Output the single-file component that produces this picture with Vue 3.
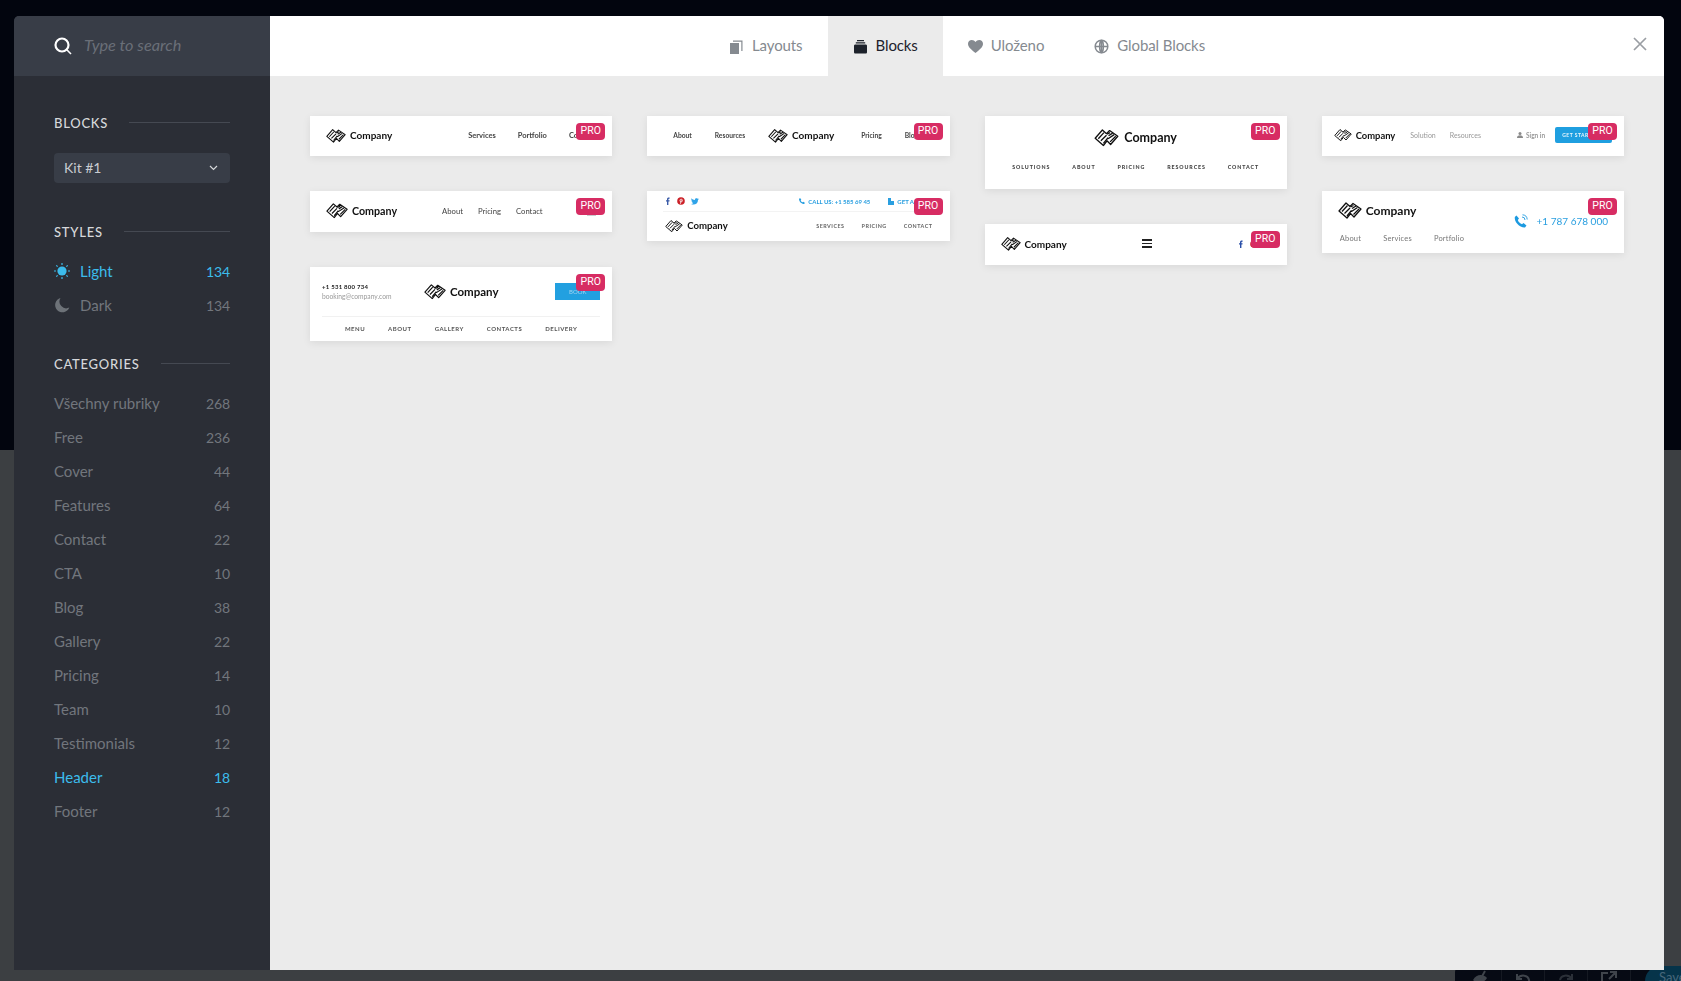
<template>
  <div class="page">
    <div class="page-top"></div>
    <div class="page-mid"></div>
    <div class="page-bottom">
      <div class="toolbar">
        <span class="tool"><svg width="20" height="20" viewBox="0 0 20 20"><path d="M3 11c3-5 9-7 14-2-3 5-9 7-14 2z" fill="#3f444b" /><path d="M15 2 6 18" stroke="#3f444b" stroke-width="2" /></svg></span>
        <span class="tool"><svg width="20" height="20" viewBox="0 0 20 20"><path d="M4 5v5h5M4.500 9.500C8 5 15 6 16 11s-2 8-6 8" fill="none" stroke="#3f444b" stroke-width="2" /></svg></span>
        <span class="tool"><svg width="20" height="20" viewBox="0 0 20 20"><path d="M16 5v5h-5M15.500 9.500C12 5 5 6 4 11" fill="none" stroke="#2b3038" stroke-width="2" /></svg></span>
        <span class="tool"><svg width="20" height="20" viewBox="0 0 20 20"><path d="M9 4H3v14h14v-6M11 3h6v6M17 3l-7 7" fill="none" stroke="#3f444b" stroke-width="2" /></svg></span>
        <span class="save">Save</span>
      </div>
    </div>

    <svg class="defs" width="0" height="0">
      <symbol id="logo" viewBox="0 0 24 18">
        <path d="M1 10 8 2 12 5.500 15 2.500 23 8 16 16 12.500 12.500 9 17Z" fill="none" stroke="#111" stroke-width="1.300" stroke-linejoin="round" />
        <path d="M4 10.500 9.500 4.500M6.500 12.500 12 7M9 15 13.500 9.500M12.500 6 15.500 4.500M14 7.500 18 5M13.500 10.500 19.500 6.500M15.500 13.500 21 8" stroke="#111" stroke-width="1.300" fill="none" />
      </symbol>
    </svg>

    <div class="modal">
      <aside class="sidebar">
        <div class="search">
          <svg class="search-icon" width="18" height="18" viewBox="0 0 18 18">
            <circle cx="8" cy="8" r="6.500" fill="none" stroke="#fff" stroke-width="2.200" />
            <path d="M12.800 12.800l4.200 4.200" stroke="#fff" stroke-width="1.600" />
          </svg>
          <span class="placeholder">Type to search</span>
        </div>
        <div class="side-body">
          <div class="side-title"><span>BLOCKS</span><i></i></div>
          <div class="select">
            <span class="select-text">Kit #1</span>
            <svg width="9" height="6" viewBox="0 0 9 6"><path d="M1 1l3.500 3.500L8 1" fill="none" stroke="#d5d7da" stroke-width="1.200" /></svg>
          </div>
          <div class="side-title styles"><span>STYLES</span><i></i></div>
          <div class="list">
            <div class="row active">
              <svg class="row-icon" width="16" height="16" viewBox="0 0 16 16">
                <circle cx="8" cy="8" r="4.600" fill="#3cbcec" />
                <path d="M8 0v2M8 14v2M0 8h2M14 8h2M2.300 2.300l1.300 1.300M12.400 12.400l1.300 1.300M2.300 13.700l1.300-1.300M12.400 3.600l1.300-1.300" stroke="#3cbcec" stroke-width="1.200" />
              </svg>
              <span class="row-name">Light</span><span class="count">134</span>
            </div>
            <div class="row">
              <svg class="row-icon" width="16" height="16" viewBox="0 0 16 16">
                <path d="M6.500 1a7.300 7.300 0 1 0 8.800 9.600A6.800 6.800 0 0 1 6.500 1z" fill="#6d7278" />
              </svg>
              <span class="row-name">Dark</span><span class="count">134</span>
            </div>
          </div>
          <div class="side-title cats"><span>CATEGORIES</span><i></i></div>
          <div class="list">
            <div v-for="c in categories" :key="c.name" class="row" :class="{ active: c.name === 'Header' }">
              <span class="row-name">{{ c.name }}</span><span class="count">{{ c.count }}</span>
            </div>
          </div>
        </div>
      </aside>

      <main class="main">
        <header class="topbar">
          <nav class="tabs">
            <div v-for="tab in tabs" :key="tab.label" class="tab" :class="{ current: tab.label === 'Blocks' }">
              <svg width="15" height="15" viewBox="0 0 15 15" class="tab-icon">
                <path v-if="tab.fill" :d="tab.d" fill="currentColor" fill-rule="evenodd" />
                <g v-else fill="none" stroke="currentColor" stroke-width="1.500">
                  <circle cx="7.500" cy="7.500" r="6.300" />
                  <path :d="tab.d" />
                </g>
              </svg>
              <span class="tab-text">{{ tab.label }}</span>
            </div>
          </nav>
          <svg class="close" width="14" height="14" viewBox="0 0 14 14"><path d="M1 1l12 12M13 1 1 13" stroke="#9a9ea3" stroke-width="1.700" /></svg>
        </header>

        <section class="grid">
          <div class="col">
            <div class="card c-a">
              <div class="thumb t1">
                <span class="brand"><svg class="logo"><use href="#logo" /></svg><b>Company</b></span>
                <span class="menu"><em>Services</em><em>Portfolio</em><em>Contact</em></span>
              </div>
              <span class="pro">PRO</span>
            </div>
            <div class="card c-b">
              <div class="thumb t2">
                <span class="brand"><svg class="logo"><use href="#logo" /></svg><b>Company</b></span>
                <span class="menu"><em>About</em><em>Pricing</em><em>Contact</em></span>
                <span class="ghost"></span>
              </div>
              <span class="pro">PRO</span>
            </div>
            <div class="card c-c">
              <div class="thumb t3">
                <div class="t3-top">
                  <div class="contact-lines"><strong>+1 531 800 734</strong><small>booking@company.com</small></div>
                  <span class="brand"><svg class="logo"><use href="#logo" /></svg><b>Company</b></span>
                  <span class="book">BOOK</span>
                </div>
                <div class="caps"><em>MENU</em><em>ABOUT</em><em>GALLERY</em><em>CONTACTS</em><em>DELIVERY</em></div>
              </div>
              <span class="pro">PRO</span>
            </div>
          </div>

          <div class="col">
            <div class="card c-a">
              <div class="thumb t4">
                <span class="menu"><em>About</em><em>Resources</em></span>
                <span class="brand"><svg class="logo"><use href="#logo" /></svg><b>Company</b></span>
                <span class="menu"><em>Pricing</em><em>Blog</em></span>
              </div>
              <span class="pro">PRO</span>
            </div>
            <div class="card c-d">
              <div class="thumb t5">
                <div class="t5-top">
                  <span class="socials">
                    <svg width="6" height="8" viewBox="0 0 6 8"><path d="M2 8V4.500H1V3.200h1V2.200C2 1 2.800.4 4.600.6v1.200c-1-.1-1.200.1-1.200.6v.8h1.200l-.2 1.300h-1V8z" fill="#3a5ba8" /></svg>
                    <svg width="8" height="8" viewBox="0 0 8 8"><circle cx="4" cy="4" r="3.800" fill="#cb2027" /><path d="M3.400 6.800 4.300 2.800" stroke="#fff" stroke-width=".8" /><circle cx="4.200" cy="3.500" r="1.300" fill="none" stroke="#fff" stroke-width=".7" /></svg>
                    <svg width="8" height="7" viewBox="0 0 8 7"><path d="M0 6c3 1.500 7 .2 7-4l1-1-1 .2.600-.9-1 .4C5.500-.2 3.700.5 4 2 2.500 2 1.200 1.300.5.300.1 1.200.3 2 1 2.600L.4 2.400c0 .8.400 1.300 1.200 1.600h-.6c.2.600.7 1 1.400 1C1.800 5.700 1 6 0 6z" fill="#2fa3e8" /></svg>
                  </span>
                  <span class="t5-call">
                    <svg width="6" height="6" viewBox="0 0 6 6"><path d="M1 0 2.300 1.500 1.700 2.400C2 3.200 2.800 4 3.600 4.300L4.500 3.700 6 5 5 6C2.500 6 0 3.500 0 1z" fill="#2a9fe0" /></svg>
                    <em>CALL US: +1 585 69 45</em>
                    <svg class="t5-doc" width="6" height="7" viewBox="0 0 6 7"><path d="M0 0h3v3h3v4H0z" fill="#2a9fe0" /></svg>
                    <em>GET A QUOTE</em>
                  </span>
                </div>
                <div class="t5-bottom">
                  <span class="brand"><svg class="logo"><use href="#logo" /></svg><b>Company</b></span>
                  <span class="caps-inline"><em>SERVICES</em><em>PRICING</em><em>CONTACT</em></span>
                </div>
              </div>
              <span class="pro">PRO</span>
            </div>
          </div>

          <div class="col">
            <div class="card c-e">
              <div class="thumb t6">
                <span class="brand"><svg class="logo"><use href="#logo" /></svg><b>Company</b></span>
                <div class="caps"><em>SOLUTIONS</em><em>ABOUT</em><em>PRICING</em><em>RESOURCES</em><em>CONTACT</em></div>
              </div>
              <span class="pro">PRO</span>
            </div>
            <div class="card c-b">
              <div class="thumb t7">
                <span class="brand"><svg class="logo"><use href="#logo" /></svg><b>Company</b></span>
                <span class="burger"><i></i><i></i><i></i></span>
                <span class="t7-social">
                  <svg width="6" height="8" viewBox="0 0 6 8"><path d="M2 8V4.500H1V3.200h1V2.200C2 1 2.800.4 4.600.6v1.200c-1-.1-1.200.1-1.200.6v.8h1.200l-.2 1.300h-1V8z" fill="#2a4fa8" /></svg>
                  <svg width="8" height="8" viewBox="0 0 8 8"><circle cx="4" cy="4" r="3.800" fill="#cb2027" /></svg>
                </span>
              </div>
              <span class="pro">PRO</span>
            </div>
          </div>

          <div class="col">
            <div class="card c-a">
              <div class="thumb t8">
                <span class="brand"><svg class="logo"><use href="#logo" /></svg><b>Company</b></span>
                <span class="menu"><em>Solution</em><em>Resources</em></span>
                <span class="t8-right">
                  <svg width="6" height="6" viewBox="0 0 6 6"><circle cx="3" cy="1.500" r="1.500" fill="#8a8a8a" /><path d="M0 6c0-2 1-2.800 3-2.800S6 4 6 6z" fill="#8a8a8a" /></svg>
                  <em>Sign in</em>
                  <span class="start">GET STARTED</span>
                </span>
              </div>
              <span class="pro">PRO</span>
            </div>
            <div class="card c-f">
              <div class="thumb t9">
                <div class="t9-left">
                  <span class="brand"><svg class="logo"><use href="#logo" /></svg><b>Company</b></span>
                  <span class="menu"><em>About</em><em>Services</em><em>Portfolio</em></span>
                </div>
                <span class="phone">
                  <svg width="14" height="14" viewBox="0 0 14 14">
                    <path d="M2.500 1.500 5 4.500 3.800 6C4.500 8 6 9.500 8 10.200L9.500 9l3 2.500L11 13.500C6 14 0 8 .8 3z" fill="#1d9ae0" />
                    <path d="M8 3a3 3 0 0 1 3 3M8.500.8a5 5 0 0 1 4.700 4.700" fill="none" stroke="#1d9ae0" stroke-width=".9" />
                  </svg>
                  <span>+1 787 678 000</span>
                </span>
              </div>
              <span class="pro">PRO</span>
            </div>
          </div>
        </section>
      </main>
    </div>
  </div>
</template>

<script setup>
const categories = [
  { name: 'Všechny rubriky', count: 268 },
  { name: 'Free', count: 236 },
  { name: 'Cover', count: 44 },
  { name: 'Features', count: 64 },
  { name: 'Contact', count: 22 },
  { name: 'CTA', count: 10 },
  { name: 'Blog', count: 38 },
  { name: 'Gallery', count: 22 },
  { name: 'Pricing', count: 14 },
  { name: 'Team', count: 10 },
  { name: 'Testimonials', count: 12 },
  { name: 'Header', count: 18 },
  { name: 'Footer', count: 12 },
]

const tabs = [
  { label: 'Layouts', fill: true, d: 'M1 4h9v11H1zM4 1.500h9.500V12H12.300V2.700H4z' },
  { label: 'Blocks', fill: true, d: 'M4 1h7v1.300H4zM2.800 3.300h9.400v1.300H2.800zM2.500 5.500h10c1 0 1.500.5 1.500 1.500v6c0 1-.5 1.500-1.500 1.500h-10C1.500 14.500 1 14 1 13V7c0-1 .5-1.500 1.500-1.500z' },
  { label: 'Uloženo', fill: true, d: 'M7.500 14C3 10.500 0 8 0 4.800 0 2.500 1.700 1 3.800 1 5.300 1 6.700 1.700 7.500 3 8.300 1.700 9.700 1 11.200 1 13.300 1 15 2.500 15 4.800 15 8 12 10.500 7.500 14z' },
  { label: 'Global Blocks', fill: false, d: 'M1.200 7.500h12.600M7.500 1.200v12.600M7.500 1.200C5 3 5 12 7.500 13.800M7.500 1.200C10 3 10 12 7.500 13.800' },
]
</script>

<style>
html, body { margin: 0; background: #02050e; }
</style>

<style scoped>
.page {
  position: relative;
  height: 981px;
  display: flex;
  flex-direction: column;
  overflow: hidden;
  font-family: Lato, "Noto Sans", sans-serif;
}
.page-top { height: 450px; background: #02050e; }
.page-mid { flex: 1; background: #3c3f42; }
.page-bottom { height: 15px; background: #3c3f42; display: flex; justify-content: flex-end; }
.toolbar {
  width: 226px;
  background: #060a14;
  border-top-left-radius: 6px;
  display: flex;
  padding-top: 3px;
  padding-left: 4px;
  box-sizing: border-box;
  overflow: hidden;
}
.tool {
  width: 43px;
  height: 20px;
  flex: none;
  display: flex;
  justify-content: center;
  border-right: 1px solid #151922;
  box-sizing: border-box;
}
.save {
  margin-left: 14px;
  margin-top: -3px;
  flex: none;
  width: 60px;
  height: 30px;
  padding-left: 14px;
  padding-top: 3px;
  box-sizing: border-box;
  background: #06344a;
  border-radius: 15px 0 0 15px;
  color: #47677a;
  font-size: 13px;
}
.defs { position: absolute; }

.modal {
  position: absolute;
  left: 14px;
  top: 16px;
  width: 1650px;
  height: 954px;
  display: flex;
  border-radius: 5px 5px 0 0;
  overflow: hidden;
}

.sidebar { width: 256px; flex: none; background: #2b2e36; display: flex; flex-direction: column; }
.search {
  height: 60px;
  background: #383d47;
  display: flex;
  align-items: center;
  padding-left: 40px;
  gap: 12px;
}
.placeholder { font-style: italic; font-size: 16.300px; color: #6a6f78; padding-bottom: 3px; }
.side-body { padding: 36px 40px 0; }
.side-title {
  height: 20px;
  display: flex;
  align-items: center;
  gap: 21px;
  color: #d6d8db;
  font-size: 13px;
  letter-spacing: .75px;
  font-weight: 500;
}
.side-title span { padding-top: 1px; }
.side-title i { flex: 1; height: 1px; background: #454952; }
.styles { margin-top: 38px; }
.cats { margin-top: 31px; }
.select {
  margin-top: 21px;
  height: 30px;
  background: #383d47;
  border-radius: 4px;
  display: flex;
  align-items: center;
  justify-content: space-between;
  padding: 0 12px 0 10px;
  color: #c9ccd1;
  font-size: 14px;
}
.select-text { padding-bottom: 2px; }
.list { margin-top: 13px; }
.row {
  height: 34px;
  display: flex;
  align-items: center;
  color: #72767d;
  font-size: 15px;
}
.row.active { color: #3cbcec; }
.row-icon { margin-right: 10px; }
.row-name { flex: 1; }
.count { font-size: 14px; letter-spacing: -.1px; }

.main { flex: 1; background: #ebebeb; display: flex; flex-direction: column; min-width: 0; }
.topbar {
  position: relative;
  height: 60px;
  background: #fff;
  display: flex;
  justify-content: center;
}
.tabs { display: flex; }
.tab {
  display: flex;
  align-items: center;
  gap: 8px;
  padding: 0 25px;
  color: #858a90;
  font-size: 15px;
  letter-spacing: -.1px;
}
.tab-text { padding-bottom: 2px; }
.tab.current { background: #ebebeb; color: #1d222b; }
.tab-icon { flex: none; }
.close { position: absolute; right: 17px; top: 21px; }

.grid {
  flex: 1;
  display: grid;
  grid-template-columns: repeat(4, minmax(0, 1fr));
  gap: 35px;
  padding: 40px;
  align-items: start;
}
.col { display: flex; flex-direction: column; gap: 35px; min-width: 0; }
.card {
  position: relative;
  background: #fff;
  box-shadow: 0 2px 8px rgba(0, 0, 0, .08);
  overflow: hidden;
}
.c-a { height: 40px; }
.c-b { height: 41px; }
.c-c { height: 74px; }
.c-d { height: 50px; }
.c-e { height: 73px; }
.c-f { height: 62px; }
.pro {
  position: absolute;
  top: 7px;
  right: 7px;
  width: 29px;
  height: 17px;
  background: #d72c63;
  border-radius: 4px;
  color: #fff;
  font: 10.500px/16px Roboto, sans-serif;
  text-align: center;
}

.thumb { height: 100%; filter: blur(.25px); box-sizing: border-box; font-family: Lato, sans-serif; }
.thumb em { font-style: normal; white-space: nowrap; }
.brand { display: inline-flex; align-items: center; gap: 4px; color: #111; }
.brand b { font-weight: 700; font-size: 10px; }
.logo { width: 20px; height: 15px; flex: none; }
.menu { display: flex; color: #444; font-size: 7.500px; font-weight: 700; }

.t1 { display: flex; align-items: center; padding: 0 0 2px 16px; }
.t1 .menu { margin-left: 76px; gap: 22px; }
.t2 { display: flex; align-items: center; padding: 0 0 2px 16px; }
.t2 .brand b { font-size: 10.700px; }
.t2 .logo { width: 22px; height: 16.500px; }
.t2 .menu { margin-left: 45px; gap: 15px; font-size: 7.700px; font-weight: 400; }
.ghost { position: absolute; left: 277px; top: 17px; width: 9px; height: 8px; background: #c9cbce; }
.t3 { padding: 16px 12px 0; }
.t3-top { display: flex; align-items: center; border-bottom: 1px solid #f1f1f1; padding-bottom: 16px; height: 17px; }
.contact-lines { display: flex; flex-direction: column; gap: 3px; width: 102px; }
.contact-lines strong { font-size: 6px; color: #222; line-height: 6px; letter-spacing: .25px; }
.contact-lines small { font-size: 6.700px; color: #999; line-height: 7px; }
.t3 .brand b { font-size: 11.500px; }
.t3 .logo { width: 22px; height: 16.500px; }
.book { margin-left: auto; width: 45px; height: 17px; background: #22a0e0; color: #9fd4f2; font-size: 6px; line-height: 17px; text-align: center; }
.caps { display: flex; justify-content: center; color: #555; font-size: 6px; font-weight: 700; letter-spacing: .6px; }
.t3 .caps { gap: 23px; margin-top: 8px; letter-spacing: .5px; }
.t4 { display: flex; align-items: center; padding: 0 0 2px 26px; }
.t4 .menu { gap: 23px; font-size: 6.700px; }
.t4 .brand { margin: 0 27px 0 23px; }
.t5-top { height: 20px; margin: 0 16px; border-bottom: 1px solid #f3f3f3; display: flex; align-items: center; padding-left: 2px; }
.socials { display: flex; gap: 6px; align-items: center; }
.t5-call { display: flex; align-items: center; gap: 3px; margin-left: 100px; color: #2a9fe0; font-size: 6px; font-weight: 700; }
.t5-doc { margin-left: 15px; }
.t5-bottom { display: flex; align-items: center; padding: 7px 17px 0 18px; justify-content: space-between; }
.t5-bottom .logo { width: 18px; height: 13.500px; }
.t5-bottom .brand b { font-size: 9.600px; }
.caps-inline { display: flex; gap: 17px; color: #666; font-size: 5.400px; font-weight: 700; letter-spacing: .5px; }
.t6 { padding-top: 12px; display: flex; flex-direction: column; align-items: center; }
.t6 .brand { gap: 5px; }
.t6 .brand b { font-size: 12.500px; }
.t6 .logo { width: 25px; height: 18.500px; }
.t6 .caps { gap: 22px; margin-top: 17px; color: #444; font-size: 5.300px; letter-spacing: .9px; font-weight: 900; }
.t7 { display: flex; align-items: center; padding: 0 0 2px 16px; }
.burger { display: flex; flex-direction: column; gap: 2px; margin-left: 75px; }
.burger i { display: block; width: 10px; height: 1.500px; background: #222; }
.t7-social { display: flex; gap: 6px; margin-left: 86px; align-items: center; }
.t8 { display: flex; align-items: center; padding: 0 0 2px 12px; }
.t8 .logo { width: 18px; height: 13.500px; }
.t8 .brand b { font-size: 9.400px; }
.t8 .menu { margin-left: 15px; gap: 14px; color: #999; font-size: 7px; font-weight: 400; }
.t8-right { display: flex; align-items: center; margin-left: 36px; gap: 3px; color: #999; font-size: 6.500px; font-weight: 700; }
.start {
  margin-left: 7px;
  width: 57px;
  height: 16px;
  box-sizing: border-box;
  padding-left: 7px;
  background: #1f9fe0;
  border-radius: 2px;
  color: #e8f6fd;
  font-size: 5px;
  line-height: 16px;
  letter-spacing: .5px;
  white-space: nowrap;
  overflow: hidden;
}
.t9 { display: flex; justify-content: space-between; padding: 10px 16px 0; }
.t9-left { display: flex; flex-direction: column; }
.t9 .logo { width: 24px; height: 18px; }
.t9 .brand b { font-size: 12px; }
.t9 .menu { margin: 15px 0 0 2px; gap: 22px; color: #777; font-size: 7.500px; font-weight: 400; letter-spacing: .2px; }
.phone { display: flex; align-items: center; align-self: flex-start; gap: 9px; margin-top: 13px; color: #2a9fe0; font-size: 10px; }
</style>
